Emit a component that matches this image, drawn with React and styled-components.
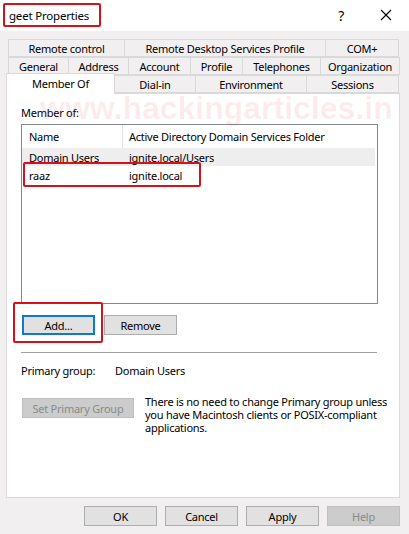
import React from "react";
import styled, { createGlobalStyle } from "styled-components";

const Global = createGlobalStyle`
  html, body { margin: 0; padding: 0; }
  body {
    background: #f2eff0;
    font-family: "Noto Sans", "Open Sans", sans-serif;
    font-size: 11px;
    color: #000;
  }
  * { box-sizing: border-box; }
`;

const FONT = `"Noto Sans", "Open Sans", sans-serif`;

const Window = styled.div`
  position: relative;
  width: 409px;
  height: 534px;
  background: #f2eff0;
  display: flex;
  flex-direction: column;
  overflow: hidden;
  font-family: ${FONT};
  font-size: 11px;
  letter-spacing: -0.25px;
`;

const TitleBar = styled.div`
  height: 31px;
  background: #ffffff;
  display: flex;
  align-items: flex-start;
  padding: 3px 0 0 3px;
`;

const TitleBox = styled.div`
  height: 24px;
  width: 98px;
  border: 2px solid #d3131c;
  border-radius: 2px;
  display: flex;
  align-items: center;
  padding-left: 4px;
  font-size: 11.5px;
  letter-spacing: -0.2px;
`;

const TitleControls = styled.div`
  margin-left: auto;
  display: flex;
  align-items: center;
  height: 24px;
  padding-right: 17px;
`;

const HelpGlyph = styled.span`
  font-size: 14px;
  margin-right: 36px;
  padding-top: 1px;
`;

const Content = styled.div`
  padding: 8px 9px 0 6px;
`;

const TabRow = styled.div`
  display: flex;
  height: 18px;
  padding: ${(p) => (p.$front ? "0" : "0 2px")};
  align-items: flex-end;
`;

const Tab = styled.div`
  width: ${(p) => p.$w}px;
  height: ${(p) => (p.$active ? 21 : 18)}px;
  flex: none;
  display: flex;
  align-items: ${(p) => (p.$active ? "flex-start" : "center")};
  justify-content: center;
  padding-top: ${(p) => (p.$active ? "2px" : "0")};
  border: 1px solid #d9d9d9;
  border-bottom: ${(p) => (p.$active ? "none" : "1px solid #d9d9d9")};
  margin-right: -1px;
  margin-bottom: ${(p) => (p.$active ? "-1px" : "0")};
  background: ${(p) => (p.$active ? "#ffffff" : "#f2eff0")};
  position: relative;
  z-index: ${(p) => (p.$active ? 2 : 1)};
  white-space: nowrap;
`;

const Panel = styled.div`
  position: relative;
  height: 405px;
  width: 394px;
  background: #ffffff;
  border: 1px solid #d9d9d9;
  padding: 11px 0 0 14px;
  display: flex;
  flex-direction: column;
`;

const Label = styled.div`
  line-height: 16px;
  height: 16px;
`;

const ListBox = styled.div`
  position: relative;
  margin-top: 3px;
  width: 357px;
  height: 180px;
  border: 1px solid #828790;
  background: #fff;
`;

const ListRow = styled.div`
  display: flex;
  height: ${(p) => (p.$header ? 23 : 18)}px;
  width: 353px;
  align-items: center;
  background: ${(p) => (p.$selected ? "#eeeeee" : "transparent")};
`;

const Cell = styled.div`
  height: 100%;
  display: flex;
  align-items: center;
  width: ${(p) => (p.$first ? "101px" : "auto")};
  flex: ${(p) => (p.$first ? "none" : "1")};
  padding-left: ${(p) => (p.$first ? "7px" : "6px")};
  border-right: ${(p) => (p.$divider ? "1px solid #e5e5e5" : "none")};
  white-space: nowrap;
`;

const Highlight = styled.div`
  position: absolute;
  left: ${(p) => p.$x}px;
  top: ${(p) => p.$y}px;
  width: ${(p) => p.$w}px;
  height: ${(p) => p.$h}px;
  border: 2px solid #d3131c;
  border-radius: 2px;
  pointer-events: none;
  z-index: 5;
`;

const ButtonRow = styled.div`
  position: relative;
  display: flex;
  gap: ${(p) => p.$gap || 9}px;
  margin-top: ${(p) => p.$mt || 0}px;
  margin-left: ${(p) => p.$ml || 0}px;
  justify-content: ${(p) => (p.$end ? "flex-end" : "flex-start")};
  padding-right: ${(p) => p.$pr || 0}px;
`;

const Button = styled.button`
  width: ${(p) => p.$w || 73}px;
  height: 20px;
  padding: 0;
  font-family: ${FONT};
  font-size: 11px;
  letter-spacing: -0.25px;
  background: ${(p) => (p.disabled ? "#cccccc" : "#e1e1e1")};
  color: ${(p) => (p.disabled ? "#8a8a8a" : "#000")};
  border: ${(p) =>
    p.$default ? "2px solid #0f78d6" : p.disabled ? "1px solid #bfbfbf" : "1px solid #adadad"};
  border-radius: 0;
  flex: none;
`;

const Separator = styled.div`
  margin-top: 17px;
  width: 356px;
  height: 1px;
  background: #a0a0a0;
`;

const InfoRow = styled.div`
  display: flex;
  margin-top: 10px;
  line-height: 16px;
`;

const InfoKey = styled.div`
  width: 94px;
`;

const PrimaryRow = styled.div`
  display: flex;
  align-items: flex-start;
  margin-top: 19px;
  margin-left: 1px;
  gap: 11px;
`;

const Note = styled.div`
  margin-top: -3px;
  line-height: 13px;
  width: 250px;
`;

const Footer = styled(ButtonRow)`
  margin-top: 8px;
`;

const Watermark = styled.div`
  position: absolute;
  left: 40px;
  top: 90px;
  font-family: "Liberation Sans", Arial, sans-serif;
  font-weight: bold;
  font-size: 32px;
  letter-spacing: 0;
  color: rgba(225, 40, 60, 0.09);
  pointer-events: none;
  white-space: nowrap;
  z-index: 10;
`;

function CloseIcon() {
  return (
    <svg width="12" height="12" viewBox="0 0 12 12">
      <path d="M1 1 L11 11 M11 1 L1 11" stroke="#000" strokeWidth="1.1" fill="none" />
    </svg>
  );
}

export default function App() {
  return (
    <>
      <Global />
      <Window>
        <TitleBar>
          <TitleBox>geet Properties</TitleBox>
          <TitleControls>
            <HelpGlyph>?</HelpGlyph>
            <CloseIcon />
          </TitleControls>
        </TitleBar>
        <Content>
          <TabRow>
            <Tab $w={117}>Remote control</Tab>
            <Tab $w={202}>Remote Desktop Services Profile</Tab>
            <Tab $w={74}>COM+</Tab>
          </TabRow>
          <TabRow>
            <Tab $w={61}>General</Tab>
            <Tab $w={61}>Address</Tab>
            <Tab $w={63}>Account</Tab>
            <Tab $w={53}>Profile</Tab>
            <Tab $w={79}>Telephones</Tab>
            <Tab $w={80}>Organization</Tab>
          </TabRow>
          <TabRow $front>
            <Tab $w={109} $active>Member Of</Tab>
            <Tab $w={82}>Dial-in</Tab>
            <Tab $w={112}>Environment</Tab>
            <Tab $w={93}>Sessions</Tab>
          </TabRow>
          <Panel>
            <Label>Member of:</Label>
            <ListBox>
              <ListRow $header>
                <Cell $first $divider>Name</Cell>
                <Cell>Active Directory Domain Services Folder</Cell>
              </ListRow>
              <ListRow $selected>
                <Cell $first>Domain Users</Cell>
                <Cell>ignite.local/Users</Cell>
              </ListRow>
              <ListRow>
                <Cell $first>raaz</Cell>
                <Cell>ignite.local</Cell>
              </ListRow>
              <Highlight $x={1} $y={37} $w={178} $h={25} />
            </ListBox>
            <ButtonRow $mt={11} $ml={1}>
              <Button $default>Add...</Button>
              <Button>Remove</Button>
              <Highlight $x={-9} $y={-13} $w={90} $h={41} />
            </ButtonRow>
            <Separator />
            <InfoRow>
              <InfoKey>Primary group:</InfoKey>
              <div>Domain Users</div>
            </InfoRow>
            <PrimaryRow>
              <Button $w={112} disabled>Set Primary Group</Button>
              <Note>
                There is no need to change Primary group unless
                <br />
                you have Macintosh clients or POSIX-compliant
                <br />
                applications.
              </Note>
            </PrimaryRow>
          </Panel>
          <Footer $end $gap={8} $pr={-2}>
            <Button>OK</Button>
            <Button>Cancel</Button>
            <Button>Apply</Button>
            <Button disabled>Help</Button>
          </Footer>
        </Content>
        <Watermark>www.hackingarticles.in</Watermark>
      </Window>
    </>
  );
}
